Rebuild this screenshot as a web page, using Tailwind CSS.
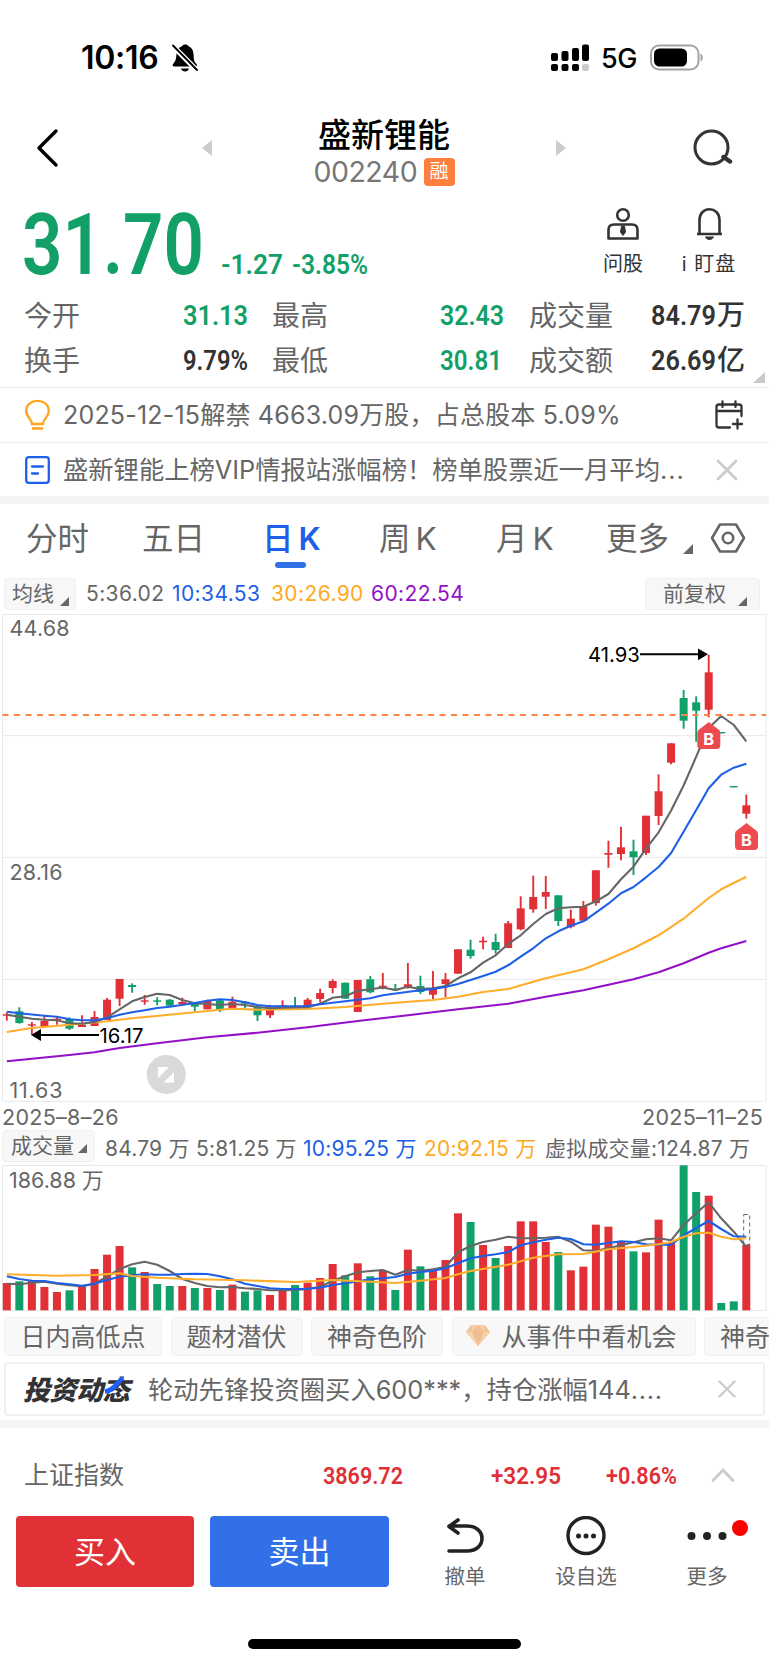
<!DOCTYPE html>
<html lang="zh-CN">
<head>
  <meta charset="UTF-8">
  <meta name="viewport" content="width=device-width, initial-scale=1.0">
  <title>盛新锂能 002240</title>
  <script src="https://cdn.jsdelivr.net/npm/@tailwindcss/browser@4"></script>
</head>
<body class="w-[769px] h-[1665px] overflow-hidden bg-white text-[#666] font-[Inter,'Noto_Sans_CJK_SC',sans-serif]">

  <!-- Status bar -->
  <div class="h-[105px] pt-[10px] pl-[81px] pr-[65px] flex items-center text-black">
    <span class="text-[32px] font-semibold leading-none w-[90px] tracking-[-0.3px]">10:16</span>
    <svg width="28" height="30" viewBox="0 0 28 30">
      <path d="M5.500 11C5 17 4.500 18 2.500 20.500C1 22.500 1.500 23.500 3.500 23.500H24.500C26.500 23.500 26.500 22 25 20.500C23 18.500 22.800 16 22.500 11C22.200 6.500 20 4 17.500 3.200C16.500 0.800 12 0.800 11 3.200C8 4 5.800 7 5.500 11Z" fill="#000"/>
      <path d="M10 25.500H18C17 29.500 11 29.500 10 25.500Z" fill="#000"/>
      <path d="M0 1L27 28.500" stroke="#fff" stroke-width="5.200"/>
      <path d="M2 2.500L26 27" stroke="#000" stroke-width="1.900" stroke-linecap="round"/>
    </svg>
    <svg class="ml-auto" width="40" height="28" viewBox="0 0 40 28">
      <g fill="#000">
        <rect x="1" y="9" width="7" height="8" rx="2"/><rect x="11.500" y="7" width="7" height="10" rx="2"/>
        <rect x="22" y="4" width="7" height="13" rx="2"/><rect x="32" y="0.500" width="7" height="16.500" rx="2"/>
        <rect x="1" y="20" width="7" height="7" rx="2"/><rect x="11.500" y="20" width="7" height="7" rx="2"/>
        <rect x="22" y="20" width="7" height="7" rx="2"/>
      </g>
      <rect x="32" y="20" width="7" height="7" rx="2" fill="#ccc"/>
    </svg>
    <span class="ml-[11px] w-[38px] pt-[2px] text-[27px] font-medium leading-none tracking-[-0.5px]">5G</span>
    <svg class="ml-[11px]" width="54" height="28" viewBox="0 0 54 28">
      <rect x="1" y="1.500" width="47.500" height="24" rx="8" fill="none" stroke="#a3a3a3" stroke-width="2"/>
      <rect x="4" y="4.500" width="33" height="18" rx="5.500" fill="#000"/>
      <path d="M50.500 9.500C53.500 10.500 53.500 16.500 50.500 17.500Z" fill="#a3a3a3"/>
    </svg>
  </div>

  <!-- Header -->
  <header class="h-[86px] px-9 flex items-center">
    <svg width="24" height="42" viewBox="0 0 24 42"><path d="M20 4L3 21L20 38" fill="none" stroke="#000" stroke-width="3.400" stroke-linecap="round" stroke-linejoin="round"/></svg>
    <svg class="ml-[142px]" width="11" height="16" viewBox="0 0 11 16"><path d="M10 0V16L0 8Z" fill="#ccc"/></svg>
    <div class="self-end w-[342px] flex flex-col items-center">
      <h1 class="pt-[2px] text-[33px] leading-[36px] font-medium text-black">盛新锂能</h1>
      <div class="h-[38px] flex items-center gap-[6px]">
        <span class="w-[104px] text-[28.5px] tracking-[-0.5px] text-[#777]">002240</span>
        <span class="w-[31px] h-[28px] rounded bg-[#ff7f3e] text-white text-[19px] flex items-center justify-center">融</span>
      </div>
    </div>
    <svg width="11" height="16" viewBox="0 0 11 16"><path d="M1 0V16L11 8Z" fill="#ccc"/></svg>
    <svg class="ml-auto" width="42" height="40" viewBox="0 0 42 40"><circle cx="20.500" cy="19.500" r="16.500" fill="none" stroke="#333" stroke-width="3"/><path d="M32.500 29L39 33.500" stroke="#333" stroke-width="4.500" stroke-linecap="round"/></svg>
  </header>

  <!-- Quote -->
  <section class="relative h-[197px] border-b border-[#eee]">
    <div class="h-[101px] flex items-start">
      <svg class="text-[#12a068]" width="390" height="94" viewBox="0 0 390 94" fill="currentColor" font-family="Roboto" font-weight="600">
        <text x="22" y="83" font-size="85" textLength="182" lengthAdjust="spacingAndGlyphs">31.70</text>
        <text x="221" y="83" font-size="28" textLength="62" lengthAdjust="spacingAndGlyphs">-1.27</text>
        <text x="292" y="83" font-size="28" textLength="76" lengthAdjust="spacingAndGlyphs">-3.85%</text>
      </svg>
      <div class="ml-[203px] w-[60px] pt-4 flex flex-col items-center text-[#333]">
        <svg width="34" height="34" viewBox="0 0 34 34" fill="none" stroke="#333" stroke-width="2.600">
          <circle cx="17" cy="8" r="5.800"/>
          <path d="M8 17.500H26Q31.500 17.500 31.500 23V31.500H2.500V23Q2.500 17.500 8 17.500Z" stroke-linejoin="round"/>
          <path d="M15.500 19H18.500L19.500 25L17 28.500L14.500 25Z" fill="#333" stroke-width="1"/>
        </svg>
        <span class="mt-[9px] text-[20px] leading-[28px]">问股</span>
      </div>
      <div class="ml-[26px] w-[60px] pt-4 flex flex-col items-center text-[#333]">
        <svg width="34" height="34" viewBox="0 0 34 34" fill="none" stroke="#333" stroke-width="2.600">
          <path d="M7.500 27V13C7.500 -1.300 27.500 -1.300 27.500 13V27M5 27H30"/>
          <path d="M13 29.500H22C21 34 14 34 13 29.500Z" fill="#333" stroke="none"/>
        </svg>
        <span class="mt-[9px] text-[20px] leading-[28px] tracking-[1px]">i 盯盘</span>
      </div>
    </div>
    <div class="grid grid-cols-[158px_90px_167px_90px_122px_110px] grid-rows-[45px_45px] items-center pl-6 text-[28px] leading-none">
      <span class="pt-[2px]">今开</span>
      <svg width="68" height="34" font-family="Roboto" font-weight="600" font-size="28.500" fill="#12a068"><text x="1" y="27" textLength="65" lengthAdjust="spacingAndGlyphs">31.13</text></svg>
      <span class="pt-[2px]">最高</span>
      <svg width="68" height="34" font-family="Roboto" font-weight="600" font-size="28.500" fill="#12a068"><text x="1" y="27" textLength="64" lengthAdjust="spacingAndGlyphs">32.43</text></svg>
      <span class="pt-[2px]">成交量</span>
      <svg width="100" height="42" fill="#333" font-weight="700" font-size="28"><text x="0" y="31" font-family="Roboto" font-weight="600" font-size="28.500" textLength="65" lengthAdjust="spacingAndGlyphs">84.79</text><text x="66" y="31" font-weight="500">万</text></svg>
      <span class="pt-[2px]">换手</span>
      <svg width="68" height="34" font-family="Roboto" font-weight="600" font-size="28.500" fill="#333"><text x="1" y="27" textLength="65" lengthAdjust="spacingAndGlyphs">9.79%</text></svg>
      <span class="pt-[2px]">最低</span>
      <svg width="68" height="34" font-family="Roboto" font-weight="600" font-size="28.500" fill="#12a068"><text x="1" y="27" textLength="62" lengthAdjust="spacingAndGlyphs">30.81</text></svg>
      <span class="pt-[2px]">成交额</span>
      <svg width="100" height="42" fill="#333" font-weight="700" font-size="28"><text x="0" y="31" font-family="Roboto" font-weight="600" font-size="28.500" textLength="65" lengthAdjust="spacingAndGlyphs">26.69</text><text x="66" y="31" font-weight="500">亿</text></svg>
    </div>
    <svg class="absolute right-[4px] bottom-[4px]" width="12" height="11" viewBox="0 0 12 11"><path d="M12 0V11H0Z" fill="#c8c8c8"/></svg>
  </section>

  <!-- Notices -->
  <div class="h-[55px] border-b border-[#eee] pl-6 pr-[25px] flex items-center text-[25px]">
    <svg width="27" height="32" viewBox="0 0 27 32" fill="none" stroke="#ffa51f" stroke-width="2.400"><path d="M8 25C8 20 2.200 18 2.200 12C2.200 -1.500 24.800 -1.500 24.800 12C24.800 18 19 20 19 25Z"/><path d="M8 29.500H19" stroke-width="2.600"/></svg>
    <span class="ml-[12px] pt-[2px] w-[600px] whitespace-nowrap tracking-[0.2px]">2025-12-15解禁 4663.09万股，占总股本 5.09%</span>
    <svg class="ml-auto" width="30" height="30" viewBox="0 0 30 30" fill="none" stroke="#333" stroke-width="2.300" stroke-linecap="round"><path d="M16 27.500H5Q2.500 27.500 2.500 25V7Q2.500 4.500 5 4.500H25Q27.500 4.500 27.500 7V16M2.500 11H27.500M8.500 1.500V7M21.500 1.500V7M19 24H28M23.500 19.500V28.500"/></svg>
  </div>
  <div class="h-[53px] pl-6 pr-[31px] flex items-center text-[25.3px]">
    <svg width="27" height="28" viewBox="0 0 27 28" fill="none" stroke="#1d5fe6" stroke-width="2.300" stroke-linecap="round"><rect x="2.200" y="1.200" width="22.600" height="25.600" rx="2.500"/><path d="M8 10.500H19M8 17.500H14"/></svg>
    <span class="ml-[12px] pt-[1px] w-[640px] whitespace-nowrap">盛新锂能上榜VIP情报站涨幅榜！榜单股票近一月平均<i class="not-italic tracking-[1px]">...</i></span>
    <svg class="ml-auto" width="22" height="22" viewBox="0 0 22 22" stroke="#ccc" stroke-width="2.800" stroke-linecap="round"><path d="M2 2L20 20M20 2L2 20"/></svg>
  </div>
  <div class="h-2 bg-[#f4f4f4]"></div>

  <!-- Period tabs -->
  <nav class="h-[68px] pt-[2px] pl-[26px] flex items-center text-[31.5px] leading-none whitespace-nowrap">
    <span class="w-[116px]">分时</span>
    <span class="w-[120px]">五日</span>
    <span class="relative w-[117px] font-medium text-[#1d5fe6]">日<b class="ml-[5px] font-semibold">K</b><i class="absolute left-[13px] -bottom-[13px] w-[31px] h-[6px] rounded-full bg-[#3070e8]"></i></span>
    <span class="w-[117px]">周<span class="ml-[5px]">K</span></span>
    <span class="w-[110px]">月<span class="ml-[5px]">K</span></span>
    <span class="w-[64px]">更多</span>
    <svg class="ml-[13px] mt-[20px]" width="10" height="10"><path d="M10 0V10H0Z" fill="#666"/></svg>
    <svg class="ml-[17px] -mt-[2px]" width="36" height="32" viewBox="0 0 36 32" fill="none" stroke="#666" stroke-width="2.600" stroke-linejoin="round"><path d="M10 2.500H26L34 16L26 29.500H10L2 16Z"/><circle cx="18" cy="16" r="5.200"/></svg>
  </nav>

  <!-- Moving averages -->
  <div class="h-[42px] pt-[6px] pl-1 pr-[9px] flex items-start text-[21px]">
    <div class="w-[72px] h-8 pl-[7px] pr-[6px] rounded border border-[#f0f0f0] bg-[#f7f7f7] flex items-center justify-between">均线<svg class="mt-[15px]" width="9" height="9"><path d="M9 0V9H0Z" fill="#666"/></svg></div>
    <div class="h-8 ml-[10px] flex items-center tracking-[0.4px]">
      <span class="w-[86px]">5:36.02</span>
      <span class="w-[99px] text-[#1d5fe6]">10:34.53</span>
      <span class="w-[100px] text-[#ffa91f]">30:26.90</span>
      <span class="text-[#9310c8]">60:22.54</span>
    </div>
    <div class="ml-auto w-[115px] h-8 pl-[17px] pr-[12px] rounded border border-[#f0f0f0] bg-[#f7f7f7] flex items-center justify-between">前复权<svg class="mt-[15px]" width="9" height="9"><path d="M9 0V9H0Z" fill="#666"/></svg></div>
  </div>

  <!-- K line -->
  <svg id="kline" class="block" width="769" height="488" viewBox="0 614 769 488" font-size="21.500"></svg>
  <div class="h-7 pl-[2px] pr-[6px] pt-[2px] flex items-center justify-between text-[21.5px] tracking-[0.3px]"><span>2025–8–26</span><span>2025–11–25</span></div>

  <!-- Volume -->
  <div class="h-[35px] pl-[2px] flex items-start text-[21px] whitespace-nowrap">
    <div class="w-[93px] h-8 pl-[8px] pr-[7px] rounded border border-[#f0f0f0] bg-[#f7f7f7] flex items-center justify-between">成交量<svg class="mt-[5px]" width="9" height="9"><path d="M9 0V9H0Z" fill="#666"/></svg></div>
    <div class="h-[38px] ml-[10px] flex items-center tracking-[0.2px]">
      <span class="w-[91px]">84.79 万</span>
      <span class="w-[107px]">5:81.25 万</span>
      <span class="w-[121px] text-[#1d5fe6]">10:95.25 万</span>
      <span class="w-[121px] text-[#ffa91f]">20:92.15 万</span>
      <span>虚拟成交量:124.87 万</span>
    </div>
  </div>
  <svg id="volume" class="block" width="769" height="146" viewBox="0 1165 769 146" font-size="21.500"></svg>

  <!-- Feature chips -->
  <div class="h-[51px] pt-[6px] pl-1 flex items-start gap-[8.5px] overflow-hidden whitespace-nowrap text-[25px] leading-[36px]">
    <span class="shrink-0 w-[158px] h-[39px] pt-px rounded border border-[#f1f1f1] bg-[#f8f8f8] flex items-center justify-center">日内高低点</span>
    <span class="shrink-0 w-[132px] h-[39px] pt-px rounded border border-[#f1f1f1] bg-[#f8f8f8] flex items-center justify-center">题材潜伏</span>
    <span class="shrink-0 w-[132px] h-[39px] pt-px rounded border border-[#f1f1f1] bg-[#f8f8f8] flex items-center justify-center">神奇色阶</span>
    <span class="shrink-0 w-[244px] h-[39px] pt-px pl-[13px] rounded border border-[#f1f1f1] bg-[#f8f8f8] flex items-center gap-[12px]">
      <svg class="-mt-[3px]" width="24" height="21" viewBox="0 0 24 21"><path d="M5 0H19L24 7L12 21L0 7Z" fill="#f0c193"/><path d="M0 7H24L12 21Z" fill="#f6d2ac"/><path d="M6 7H18L12 21Z" fill="#efbe90"/><path d="M5 0L6 7L12 0L18 7L19 0Z" fill="#f3cda5"/></svg>
      从事件中看机会
    </span>
    <span class="shrink-0 w-[132px] h-[39px] pt-px rounded border border-[#f1f1f1] bg-[#f8f8f8] flex items-center justify-center">神奇九转</span>
  </div>

  <!-- Promo -->
  <div class="mx-1 h-[54px] pl-[17px] pr-[27px] rounded border-2 border-[#f0f0f0] flex items-center text-[25.3px]">
    <div class="relative w-[110px] pt-[2px] text-[27px] leading-none font-black italic text-[#333] tracking-[-0.5px]">投资动态
      <svg class="absolute left-[80px] top-[2px]" width="22" height="18" viewBox="0 0 22 18"><path d="M20 1C14 5 12 13 2 14.500" fill="none" stroke="#1d5fff" stroke-width="4.500"/></svg>
    </div>
    <span class="ml-[15px] pt-[2px] whitespace-nowrap">轮动先锋投资圈买入600***，持仓涨幅144<i class="not-italic tracking-[0.7px]">....</i></span>
    <svg class="ml-auto" width="18" height="18" viewBox="0 0 18 18" stroke="#ccc" stroke-width="2.400" stroke-linecap="round"><path d="M1.500 1.500L16.500 16.500M16.500 1.500L1.500 16.500"/></svg>
  </div>
  <div class="mt-1 h-2 bg-[#f4f4f4]"></div>

  <!-- Index -->
  <div class="h-[88px] pt-[6px] pl-6 flex items-center text-[25px]">
    <span class="w-[298px] pt-[2px]">上证指数</span>
    <svg width="400" height="30" fill="#e02f35" font-family="Roboto" font-weight="600" font-size="24.500">
      <text x="1" y="24" textLength="80" lengthAdjust="spacingAndGlyphs">3869.72</text>
      <text x="169" y="24" textLength="70" lengthAdjust="spacingAndGlyphs">+32.95</text>
      <text x="284" y="24" textLength="71" lengthAdjust="spacingAndGlyphs">+0.86%</text>
    </svg>
    <svg class="-ml-[11px]" width="24" height="14" viewBox="0 0 24 14"><path d="M2 12.500L12 2L22 12.500" fill="none" stroke="#ccc" stroke-width="2.800" stroke-linecap="round"/></svg>
  </div>

  <!-- Actions -->
  <div class="h-[123px] pl-4 flex items-start text-[20.5px]">
    <button class="w-[178px] h-[71px] pt-[2px] rounded bg-[#e13036] text-white text-[31px]">买入</button>
    <button class="ml-[16px] w-[179px] h-[71px] pt-[2px] rounded bg-[#3170e8] text-white text-[31px]">卖出</button>
    <div class="ml-[45px] w-[62px] flex flex-col items-center">
      <svg width="42" height="40" viewBox="0 0 42 40" fill="none" stroke="#222" stroke-width="3.600" stroke-linecap="round" stroke-linejoin="round"><path d="M5 35H23C43 35 43 10 23 10H5M14 4L5 10.500L14 17"/></svg>
      <span class="mt-[6px] leading-[30px]">撤单</span>
    </div>
    <div class="ml-[53px] w-[74px] flex flex-col items-center">
      <svg width="42" height="40" viewBox="0 0 42 40"><circle cx="21" cy="19.500" r="18" fill="none" stroke="#222" stroke-width="3.400"/><g fill="#222"><circle cx="13.500" cy="20" r="2.500"/><circle cx="21" cy="20" r="2.500"/><circle cx="28.500" cy="20" r="2.500"/></g></svg>
      <span class="mt-[6px] leading-[30px]">设自选</span>
    </div>
    <div class="relative ml-[53px] w-[62px] flex flex-col items-center">
      <svg width="42" height="40" viewBox="0 0 42 40" fill="#222"><circle cx="5.500" cy="20" r="4"/><circle cx="21" cy="20" r="4"/><circle cx="36.500" cy="20" r="4"/></svg>
      <span class="mt-[6px] leading-[30px]">更多</span>
      <i class="absolute left-[56px] top-[4px] w-4 h-4 rounded-full bg-[#ff0000]"></i>
    </div>
  </div>
  <div class="mx-auto w-[273px] h-[10px] rounded-full bg-black"></div>

  <script>
    const RED = "#e13036", GREEN = "#12a06a";
    const GRAY = "#666", BLUE = "#1d5fe6", ORANGE = "#ffad2b", PURPLE = "#9310c8";
    const cx = i => 6.8 + 12.534 * i;

    // colour, high, body top, body bottom, low (in y of the chart)
    const candles = [
      ["r",1012.3,1014.3,1015.7,1020.7],["g",1007.3,1011.3,1023,1023.7],["r",1022,1024.3,1025.7,1034.7],["r",1015.7,1021,1026.7,1026.7],
      ["r",1016.7,1018.7,1020,1024.7],["g",1017.3,1019,1028.7,1030],["r",1015.3,1024.7,1027,1027],["r",1011,1017,1026,1026],
      ["r",998,999.7,1020,1020],["r",979,979,998.7,1006],["g",983.3,985,987,992.7],["r",995,1000.3,1001.7,1004.7],
      ["g",997.3,1000.3,1001.7,1005.3],["g",999,999.7,1005.7,1005.7],["r",997.7,1002,1004,1004],["g",1003.7,1003.7,1006.7,1011.3],
      ["r",999.7,1001,1009.3,1009.3],["g",999.7,1000.3,1009.3,1012],["r",996.7,1001.7,1008.3,1008.3],["g",1001,1001.7,1003.7,1008.3],
      ["g",1006,1006.7,1015.3,1021],["r",1004.7,1010,1015.3,1018],["r",1000.3,1005.3,1006.7,1006.7],["g",997,1006,1007,1007],
      ["r",998,999.7,1007.3,1007.3],["r",988.7,993,999,1002.7],["r",979.3,981,988,993.3],["g",982.7,982.7,998.7,998.7],
      ["r",980,980,1012,1012],["g",976,979.3,992.3,993.3],["r",973,985.7,987.7,989.3],["g",984,988.7,990.3,990.7],
      ["r",963,984.3,987.3,988.7],["g",975.7,986,992,994],["r",971,989,994.7,999],["r",973,979.3,984,997.3],
      ["r",949.3,949.3,973.7,973.7],["g",939.7,949.7,956,958.7],["r",936.7,940.7,942.3,949.3],["g",933.7,942,950,953.7],
      ["r",921,923.3,948,948],["r",896.3,908.3,929.3,930.3],["r",875.7,897,909.3,912.7],["r",876,892,896.7,909],
      ["g",895.3,895.3,921,926],["r",909.7,918.7,926.7,928.3],["r",901,906.3,920.7,920.7],["r",870.3,870.3,903,905.7],
      ["r",840.7,853,854.7,867.7],["r",826.7,847.3,854,860.3],["g",839.7,851.3,857.3,875],["r",815.7,815.7,853,855],
      ["r",774.3,791.3,816,825],["r",743.3,743.3,762.7,764.3],["g",690,698,720.7,728.7],["g",696.3,702.3,710.7,741.7],
      ["r",654.7,672.3,709.7,717.3],["g",732,732,733.4,733.4],["g",786,786,787.4,787.4],["r",794.7,805.3,813.7,818.7]
    ];

    // [index, y] points of the averages
    const kLines = [
      [PURPLE, [[0,1061.3],[5,1055],[7,1052.3],[9,1048],[12,1043.3],[16,1037.3],[20,1032.7],[24,1027.3],[28,1021],[32,1015.3],[36,1009.3],[40,1003.7],[43,996.7],[46,990.3],[48,984.7],[50,979.3],[52,972.3],[54,963.3],[56,952.7],[57,948.3],[59,941]]],
      [ORANGE, [[0,1032],[2,1028],[5,1024.7],[8,1021.3],[10,1018.3],[15,1012.3],[17,1009.7],[18,1008.7],[20,1009.7],[24,1009],[27,1007],[31,1002.7],[34,1000],[36,996.7],[38,992],[40,989],[42,981.7],[43,978.3],[45,972.3],[46,969.3],[48,959.3],[50,948.3],[52,935.3],[54,918.7],[56,898],[57,889.3],[59,876.7]]],
      [GRAY, [[0,1014.7],[1,1016.7],[2,1018.7],[3,1019.7],[4,1020.3],[5,1023.3],[6,1023.7],[7,1022],[8,1017.5],[9,1009.3],[10,1001.3],[11,997],[12,993.7],[13,995],[14,1000],[15,1003.3],[16,1004],[17,1005],[18,1004],[19,1005],[20,1007],[21,1008.3],[22,1007.7],[24,1007.3],[25,1003.7],[26,997.7],[27,996.3],[28,990.7],[29,989.3],[30,987.5],[31,990],[32,986.7],[33,989],[34,988.3],[35,986],[36,978.3],[37,972.3],[38,962.7],[39,955.3],[40,944],[41,935.3],[42,924],[43,914],[44,908.3],[45,907.3],[46,906.7],[47,901.3],[48,894],[49,879.3],[50,866.7],[51,848.7],[52,832.3],[53,810.5],[54,785.5],[55,756.7],[56,728],[57,716],[58,725],[59,741.3]]],
      [BLUE, [[0,1011.7],[1,1013.3],[3,1015.7],[4,1016.7],[5,1019.3],[6,1020.3],[7,1020.3],[8,1018.3],[9,1014.7],[10,1012.3],[11,1010.3],[12,1008],[13,1006.7],[15,1003],[16,1000.7],[17,999.3],[18,1000],[19,1002.3],[20,1005],[21,1006.3],[24,1006],[25,1004.3],[27,1001.3],[28,999.7],[29,998.2],[30,995.3],[31,993.5],[33,990.3],[34,989],[35,987],[36,984],[37,980],[38,976],[39,971.7],[40,965.3],[41,956.7],[42,948.3],[43,938.3],[44,931.3],[45,925.7],[46,921.3],[47,912.7],[48,903.7],[49,893.3],[50,887],[51,877.3],[52,867],[53,853],[54,831.7],[55,810],[56,788.3],[57,774.7],[58,767.7],[59,763.7]]]
    ];

    // bar tops
    const bars = [519,514,512,531,546,541,528,477,434,408,472,486,522,528,528,534,534,540,524,545,541,555,541,525,518,504,462,496,460,499,483,540,419,469,481,450,310,336,405,444,408,334,334,396,426,481,470,344,350,396,424,427,329,396,166,246,257,579,574,405];
    const volGray = [521,523,518,515,521,526,529,521,500,477,463,455,464,483,507,519,528,532,531,535,537,541,541,540,537,530,512,499,487,483,480,494,480,482,478,471,427,408,396,389,380,385,385,383,380,395,421,422,415,406,397,388,385,391,345,310,277,325,365,411];
    const volBlue = [499,507,512,513,519,523,527,521,510,500,496,493,494,494,492,491,492,499,508,521,528,535,537,537,536,533,525,520,514,508,505,501,491,486,482,475,460,445,438,433,426,406,397,389,383,387,403,404,399,394,396,403,404,404,376,354,333,357,379,380];
    const volOrange = [[0,493],[4,497],[7,495],[9,490],[10,498],[12,503],[15,508],[19,511],[23,516],[26,510],[29,515],[31,519],[33,512],[35,504],[36,493],[37,483],[40,464],[42,443],[44,433],[46,432],[48,418],[50,411],[52,403],[53,396],[54,380],[55,370],[56,368],[57,380],[58,388],[59,385]];
    const vy = v => 1110 + v / 3;

    const poly = (color, pts) => `<polyline fill="none" stroke="${color}" stroke-width="2.100" stroke-linejoin="round" points="${pts.map(([i, y]) => cx(i).toFixed(1) + "," + y.toFixed(1)).join(" ")}"/>`;
    const rule = y => `<path d="M2.500 ${y}H766" stroke="#e8e8e8" stroke-width="1"/>`;
    const marker = (x, y) => `<path d="M${x} ${y}L${x + 9} ${y + 7}Q${x + 11.5} ${y + 8} ${x + 11.5} ${y + 11}V${y + 23}Q${x + 11.5} ${y + 27} ${x + 8} ${y + 27}H${x - 8}Q${x - 11.5} ${y + 27} ${x - 11.5} ${y + 23}V${y + 11}Q${x - 11.5} ${y + 8} ${x - 9} ${y + 7}Z" fill="#ee4b50"/><text x="${x}" y="${y + 22.7}" text-anchor="middle" font-size="16.500" font-weight="700" fill="#fff">B</text>`;

    let k = [614.5, 735.7, 857.3, 979.3, 1101.3].map(rule).join("");
    k += `<path d="M2.500 614V1101M766 614V1101" stroke="#e8e8e8"/>`;
    candles.forEach(([c, high, top, bottom, low], i) => {
      const color = c === "r" ? RED : GREEN;
      k += `<path d="M${cx(i)} ${high}V${low}" stroke="${color}" stroke-width="1.900"/>`;
      k += `<rect x="${cx(i) - 4}" y="${top}" width="8" height="${bottom - top}" fill="${color}"/>`;
    });
    k += kLines.map(([color, pts]) => poly(color, pts)).join("");
    k += `<path d="M2.500 715H766" stroke="#ff8444" stroke-width="1.900" stroke-dasharray="6 5.500"/>`;
    k += marker(708.8, 722) + marker(746.5, 823);
    k += `<g fill="#666" letter-spacing="0.2"><text x="9.500" y="635.700">44.68</text><text x="9.500" y="880">28.16</text><text x="9.500" y="1098.200" letter-spacing="0.8">11.63</text></g>`;
    k += `<g fill="#000" font-size="20.300"><text x="588" y="662">41.93</text><text x="99.500" y="1042.500">16.17</text>
      <path d="M640 654.300H699" stroke="#000" stroke-width="2"/><path d="M698 648.500L708 654.300L698 660.300Z"/>
      <path d="M40 1035H99" stroke="#000" stroke-width="2"/><path d="M41 1029L31 1035L41 1041Z"/></g>`;
    k += `<circle cx="166.300" cy="1074.500" r="19.500" fill="#d9d9d9"/><path d="M158 1067H169L158 1078ZM174 1082.500H163.500L174 1072Z" fill="#fff"/>`;
    document.getElementById("kline").innerHTML = k;

    let v = `<path d="M2.500 1165.500H766V1310.500H2.500Z" fill="none" stroke="#e8e8e8"/>`;
    bars.forEach((top, i) => {
      v += `<rect x="${cx(i) - 4}" y="${vy(top)}" width="8" height="${1310.3 - vy(top)}" fill="${candles[i][0] === "r" ? RED : GREEN}"/>`;
    });
    v += `<rect x="743.700" y="1214.500" width="6" height="30" fill="none" stroke="#666" stroke-dasharray="4 3"/>`;
    v += poly(GRAY, volGray.map((y, i) => [i, vy(y)])) + poly(BLUE, volBlue.map((y, i) => [i, vy(y)])) + poly(ORANGE, volOrange.map(([i, y]) => [i, vy(y)]));
    v += `<text x="9" y="1187.500" fill="#666">186.88 万</text>`;
    document.getElementById("volume").innerHTML = v;
  </script>
</body>
</html>
